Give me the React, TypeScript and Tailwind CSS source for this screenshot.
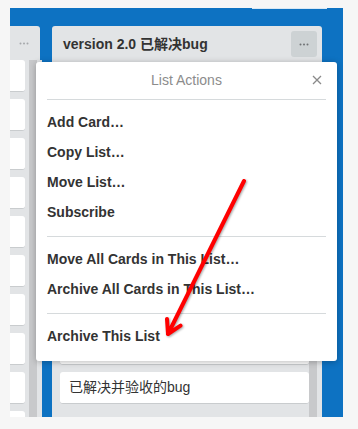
import React from 'react'

const font = { fontFamily: '"Liberation Sans", Arial, "Noto Sans CJK SC", sans-serif' }

const Dots = ({ color }: { color: string }) => (
  <svg width="10" height="3" viewBox="0 0 10 3">
    <circle cx="1.5" cy="1.5" r="1" fill={color} />
    <circle cx="5" cy="1.5" r="1" fill={color} />
    <circle cx="8.5" cy="1.5" r="1" fill={color} />
  </svg>
)

const LeftList = () => (
  <div className="w-[32px] flex flex-col">
    <div className="w-[30px] h-[34px] bg-[#e2e4e6] rounded-tr-[3px] flex items-center justify-end pr-[11px]">
      <Dots color="#a5a8ab" />
    </div>
    <div className="flex-1 flex bg-[#e2e4e6] overflow-hidden">
      <div className="w-[15px] flex flex-col gap-[7px]">
        {Array.from({ length: 10 }).map((_, i) => (
          <div key={i} className="h-[32px] shrink-0 bg-white rounded-r-[3px] border-b border-[#c9ccce]" />
        ))}
      </div>
      <div className="w-[4px]" />
      <div className="w-[8px] bg-[#c8c9cb]" />
      <div className="w-[5px]" />
    </div>
  </div>
)

const RightList = () => (
  <div className="w-[270px] flex flex-col bg-[#e2e4e6] rounded-t-[3px]">
    <div className="h-[36px] flex items-center justify-between pl-[11px] pr-[5px]">
      <span className="text-[14px] font-bold text-[#333]">version 2.0 已解决bug</span>
      <div className="w-[26px] h-[26px] rounded-[3px] bg-[#cdd2d4] flex items-center justify-center">
        <Dots color="#6f7275" />
      </div>
    </div>
    <div className="flex-1 flex overflow-hidden">
      <div className="w-[249px] ml-[8px] flex flex-col justify-end gap-[7px] pb-[13px] overflow-hidden">
        {Array.from({ length: 7 }).map((_, i) => (
          <div key={i} className="h-[32px] shrink-0 bg-white rounded-[3px] border-b border-[#c9ccce]" />
        ))}
        <div className="h-[32px] shrink-0 bg-white rounded-[3px] border-b border-[#c9ccce] flex items-center pl-[9px] text-[14px] text-[#333]">
          已解决并验收的bug
        </div>
      </div>
      <div className="w-[8px] bg-[#c8c9cb]" />
      <div className="w-[5px]" />
    </div>
  </div>
)

const Item = ({ label }: { label: string }) => (
  <div className="h-[30px] flex items-center text-[14px] font-bold text-[#333]">{label}</div>
)

const Divider = () => <div className="mt-[9px] mb-[7px] h-px bg-[#d6dadc]" />

const ListActions = () => (
  <div className="absolute left-[36px] top-[62px] w-[301px] h-[299px] bg-white rounded-[3px] shadow-[0_1px_6px_rgba(0,0,0,0.28)] px-[11px] flex flex-col">
    <div className="h-[38px] relative flex items-center justify-center border-b border-[#d6dadc]">
      <span className="text-[14px] text-[#8c8c8c]">List Actions</span>
      <svg className="absolute right-[4px] top-[13px]" width="10" height="10" viewBox="0 0 10 10">
        <path d="M1 1L9 9M9 1L1 9" stroke="#8a8a8a" strokeWidth="1.3" />
      </svg>
    </div>
    <div className="pt-[7px]">
      <Item label="Add Card…" />
      <Item label="Copy List…" />
      <Item label="Move List…" />
      <Item label="Subscribe" />
      <Divider />
      <Item label="Move All Cards in This List…" />
      <Item label="Archive All Cards in This List…" />
      <Divider />
      <Item label="Archive This List" />
    </div>
  </div>
)

export default function App() {
  return (
    <div className="relative w-[358px] h-[429px] bg-[#f6f6f6] overflow-hidden pt-[8px] pl-[10px]" style={font}>
      <div className="w-[333px] h-[409px] bg-[#0d72c2] flex gap-[10px] pt-[18px] pr-[21px]">
        <LeftList />
        <RightList />
      </div>
      <div className="absolute top-[8px] left-[252px] w-[75px] h-px bg-[#d8e8f5]" />
      <ListActions />
      <svg
        className="absolute left-0 top-0 pointer-events-none drop-shadow-[1px_1px_1px_rgba(0,0,0,0.35)]"
        width="358"
        height="429"
        viewBox="0 0 358 429"
      >
        <path
          d="M244 181L168 334M168 334L167 319M168 334L180.5 325.7"
          stroke="#ff0000"
          strokeWidth="4"
          strokeLinecap="round"
          strokeLinejoin="round"
          fill="none"
        />
      </svg>
    </div>
  )
}
